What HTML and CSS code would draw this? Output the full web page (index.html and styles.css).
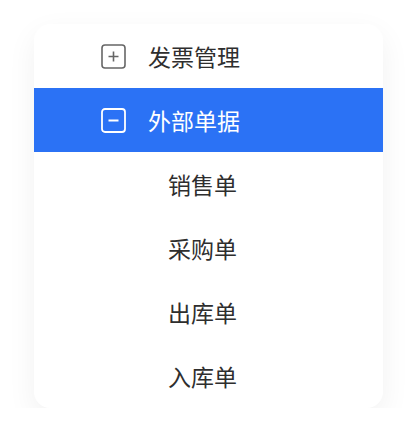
FILE: index.html
```html
<!DOCTYPE html>
<html lang="zh-CN">
<head>
    <meta charset="UTF-8">
    <meta name="viewport" content="width=device-width, initial-scale=1.0">
    <title>单据菜单</title>
    <link rel="stylesheet" href="styles.css">
</head>
<body>
    <div class="menu-card">
        <div class="menu-row">
            <svg class="toggle" width="25" height="25" viewBox="0 0 25 25">
                <rect x="1" y="1" width="23" height="23" rx="3" fill="none" stroke="currentColor" stroke-width="1.6"/>
                <path d="M7.5 12.5h10M12.5 7.5v10" stroke="currentColor" stroke-width="1.6"/>
            </svg>
            <span>发票管理</span>
        </div>
        <div class="menu-row active">
            <svg class="toggle" width="25" height="25" viewBox="0 0 25 25">
                <rect x="1" y="1" width="23" height="23" rx="3" fill="none" stroke="currentColor" stroke-width="1.8"/>
                <path d="M7.5 12.5h10" stroke="currentColor" stroke-width="1.8"/>
            </svg>
            <span>外部单据</span>
        </div>
        <div class="menu-row child">销售单</div>
        <div class="menu-row child">采购单</div>
        <div class="menu-row child">出库单</div>
        <div class="menu-row child">入库单</div>
    </div>
</body>
</html>
```

FILE: styles.css
```css
* {
    margin: 0;
    padding: 0;
    box-sizing: border-box;
}
body {
    background-color: #fff;
    font-family: "Noto Sans CJK SC", "Noto Sans", sans-serif;
    padding: 24px 33px 0 34px;
}
.menu-card {
    width: 349px;
    background: #fff;
    border-radius: 16px;
    overflow: hidden;
    box-shadow: 0 10px 30px rgba(0, 0, 0, 0.06);
}
.menu-row {
    height: 64px;
    display: flex;
    align-items: center;
    gap: 22px;
    padding-left: 67px;
    font-size: 23px;
    color: #2e2e2e;
}
.menu-row .toggle {
    color: #666;
    flex-shrink: 0;
}
.menu-row.active {
    background: #2b72f5;
    color: #fff;
}
.menu-row.active .toggle {
    color: #fff;
}
.menu-row.child {
    padding-left: 134px;
}
```
